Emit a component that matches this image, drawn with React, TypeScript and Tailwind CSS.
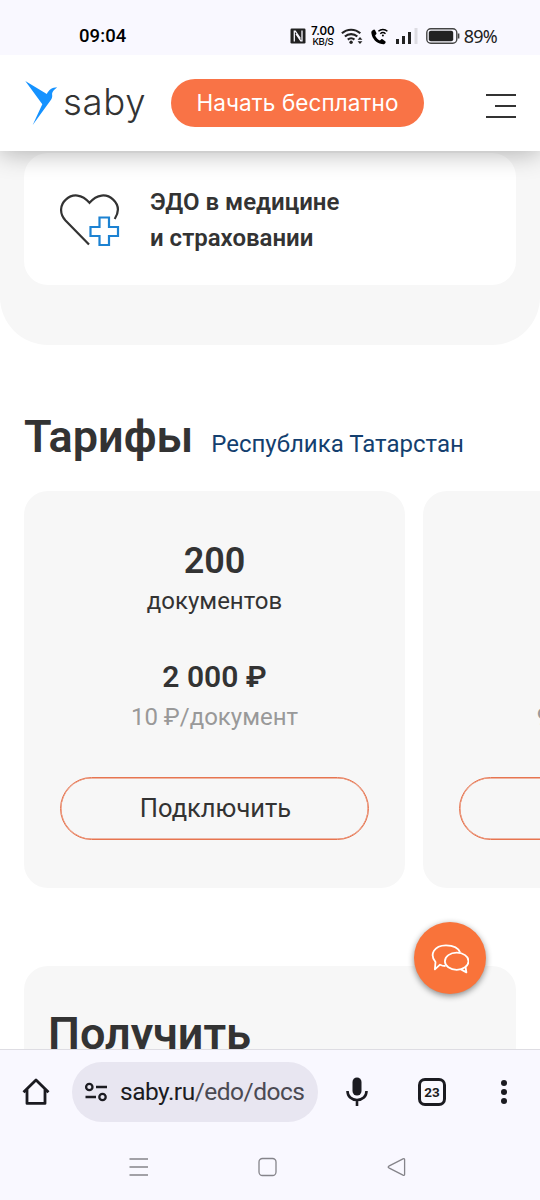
import type { ReactNode } from 'react';

function StatusBar() {
  return (
    <div className="relative z-20 flex h-[55px] shrink-0 items-center bg-[#f9f8ff] pt-[17px] pr-[43px] pl-[79px] text-black">
      <span className="text-[18.5px] leading-none font-medium tracking-[0.1px]">09:04</span>

      <div className="ml-auto flex h-5 items-center">
        {/* NFC */}
        <svg className="mr-[5px] h-4 w-4" viewBox="0 0 16 16" fill="none">
          <rect x="0.5" y="0.5" width="15" height="15" rx="1.2" fill="#222" />
          <path d="M4.3 13.4V3.2h1L10.4 10.5M12 2.6v10.2h-1.2L6 6" stroke="#f9f8ff" strokeWidth="1.3" />
        </svg>
        <div className="mr-1.5 flex w-6 flex-col items-center font-['Inter',sans-serif] font-semibold">
          <span className="text-[11.5px] leading-[11px]">7.00</span>
          <span className="text-[9.5px] leading-[9px] font-medium tracking-[-0.4px]">KB/S</span>
        </div>
        {/* Wi-Fi */}
        <svg className="mr-2 h-[18px] w-[22px]" viewBox="0 0 22 18" fill="none" stroke="#222" strokeWidth="2.1">
          <path d="M0.9 6.3a13.5 13.5 0 0 1 18.4 0M3.9 9.6a9 9 0 0 1 12.4 0M6.8 12.6a4.9 4.9 0 0 1 6.6 0" />
          <circle cx="10.1" cy="15.3" r="1.7" fill="#222" stroke="none" />
          <path d="M16.6 12.7 19 10l2.4 2.7zM16.6 14.3 19 17l2.4-2.7z" fill="#222" stroke="none" />
        </svg>
        {/* Wi-Fi calling */}
        <svg className="mr-2 h-[17px] w-[17px]" viewBox="0 0 17 17" fill="none">
          <path
            d="M1 2.7C.5 3.2.2 4 .4 5.3c.8 5.5 5 10 10.3 10.8 1.2.2 2.5.2 3.3-.7.6-.6.8-1.5.5-2l-3-2.2c-.5-.3-1-.2-1.4.2l-1.2 1.2C6.9 11.6 5 9.7 4.1 7.5l1.1-1.2c.4-.4.4-.9.2-1.4L4.1 2.3C3.7 1.6 3.2 1.5 2.6 1.7z"
            fill="#000"
          />
          <path d="M7.4 3.3a6.400 6.400 0 0 1 9 0M9.300 5.700a3.800 3.800 0 0 1 5.200 0" stroke="#000" strokeWidth="1.4" />
          <circle cx="11.9" cy="7.6" r="1" fill="#000" />
        </svg>
        {/* Signal */}
        <svg className="mr-2 h-4 w-[22px]" viewBox="0 0 22 16">
          <path d="M0 11h3v5H0zM6 8h3v8H6zM12 4h3v12h-3z" fill="#222" />
          <path d="M18.5 0h3v16h-3z" fill="#dddce2" />
        </svg>
        {/* Battery */}
        <svg className="mr-1 h-4 w-[34px]" viewBox="0 0 34 16" fill="none">
          <rect x="0.8" y="0.8" width="30" height="14.4" rx="4" stroke="#444" strokeWidth="1.4" />
          <rect x="2.8" y="2.8" width="24.4" height="10.4" rx="2" fill="#222" />
          <path d="M32.6 5.5v5" stroke="#444" strokeWidth="1.6" />
        </svg>
        <span className="font-['Noto_Sans',sans-serif] text-[18px] leading-none tracking-[-0.8px] text-[#222]">89%</span>
      </div>
    </div>
  );
}

function Header() {
  return (
    <header className="relative z-10 flex h-24 shrink-0 items-center bg-white pr-6 pl-6 shadow-[0_2px_24px_rgba(0,0,0,0.3)]">
      <svg className="h-[46px] w-[34px]" viewBox="0 0 34 46">
        <path d="M1.3 1 22.8 14C25 9.8 28 7.5 33.2 7.3C30 10 27.6 12 28.2 15.2C28.4 17.5 27.6 19.2 26.3 20.8L8.7 45 18.3 24.2Z" fill="#1592ff" />
      </svg>
      <span className="mb-0.5 ml-[5px] w-[84px] font-['Inter',sans-serif] text-[36.5px] leading-none font-[350] tracking-[0.7px] text-[#333]">
        saby
      </span>
      <button className="ml-6 flex h-12 w-[253px] items-center justify-center rounded-full bg-[#f97346] font-['Inter',sans-serif] text-[22.5px] tracking-[0.1px] text-white">
        Начать бесплатно
      </button>
      <div className="mt-1.5 ml-auto flex w-[30px] flex-col items-end gap-[9px]">
        <span className="h-0.5 w-[30px] bg-[#333]" />
        <span className="h-0.5 w-[21px] bg-[#333]" />
        <span className="h-0.5 w-[30px] bg-[#333]" />
      </div>
    </header>
  );
}

function PriceCard({ children }: { children?: ReactNode }) {
  return (
    <div className="flex h-[397px] w-[381px] shrink-0 flex-col items-center rounded-[24px] bg-[#f7f7f7] px-9 pt-[49px] pb-12">
      {children}
      <button className="mt-auto h-[63px] w-full rounded-full border border-[#e77550] pl-0.5 text-[25.5px] text-[#333] shadow-[inset_0_0_0_0.5px_#e77550]">
        Подключить
      </button>
    </div>
  );
}

function BottomBar() {
  return (
    <div className="h-[151px] shrink-0 border-t border-[#dedde3] bg-[#f9f8ff]">
      <div className="flex h-[84px] items-center pl-[22px]">
        <svg className="h-7 w-7" viewBox="0 0 28 28" fill="none" stroke="#1b1b21" strokeWidth="2.8">
          <path d="M1.5 14.3 14 2l12.500 12.300M5 11.500V25.400h18V11.500" strokeLinejoin="round" />
        </svg>
        <div className="ml-[22px] flex h-[60px] w-[246px] items-center overflow-hidden rounded-full bg-[#e8e6f1] pl-3">
          <svg className="h-[22px] w-6" viewBox="0 0 24 22" fill="none" stroke="#1b1b21" strokeWidth="2.3">
            <circle cx="5.3" cy="6" r="3.2" />
            <path d="M12 6h11M1.5 16H12" />
            <circle cx="18.5" cy="16" r="3.2" />
          </svg>
          <span className="ml-3 text-[24.5px] tracking-[-0.5px] text-[#1b1b21]">
            saby.ru<span className="text-[#4b4a53]">/edo/docs</span>
          </span>
        </div>
        <svg className="ml-7 h-[30px] w-[22px]" viewBox="0 0 22 30" fill="none">
          <rect x="6.5" y="0.5" width="9" height="18" rx="4.5" fill="#1b1b21" />
          <path d="M1.5 14c0 5.500 4 9 9.500 9s9.500-3.500 9.500-9M11 23v6" stroke="#1b1b21" strokeWidth="2.6" />
        </svg>
        <div className="ml-[50px] flex h-7 w-7 items-center justify-center rounded-[7px] border-3 border-[#1b1b21] text-[13.5px] font-bold text-[#1b1b21]">
          23
        </div>
        <div className="ml-[55px] flex flex-col gap-[3px]">
          <span className="size-1.5 rounded-full bg-[#1b1b21]" />
          <span className="size-1.5 rounded-full bg-[#1b1b21]" />
          <span className="size-1.5 rounded-full bg-[#1b1b21]" />
        </div>
      </div>

      {/* System navigation */}
      <div className="flex h-[65px] items-start pt-[23px] pl-[129px]">
        <svg className="h-5 w-5" viewBox="0 0 20 20" stroke="#85848a" strokeWidth="1.3">
          <path d="M0.5 2h18.500M0.500 10h18.500M0.500 18h18.500" />
        </svg>
        <svg className="ml-[109px] h-5 w-5" viewBox="0 0 20 20" fill="none" stroke="#85848a" strokeWidth="1.3">
          <rect x="1" y="1.5" width="17" height="17" rx="3.5" />
        </svg>
        <svg className="ml-[109px] h-5 w-5" viewBox="0 0 20 20" fill="none" stroke="#85848a" strokeWidth="1.3" strokeLinejoin="round">
          <path d="M1.8 9.2 16 1.8q1.6-.6 1.6 1v14.4q0 1.600-1.600 1L1.800 10.800q-1.300-.8 0-1.600z" />
        </svg>
      </div>
    </div>
  );
}

export default function App() {
  return (
    <div className="relative flex h-[1200px] w-[540px] flex-col overflow-hidden bg-white font-['Roboto',sans-serif] text-[#333]">
      <StatusBar />
      <Header />

      <main className="flex h-[898px] shrink-0 flex-col overflow-hidden">
        <section className="h-[194px] shrink-0 rounded-b-[48px] bg-[#f7f7f7] px-6 pt-0.5">
          <div className="flex h-[132px] items-center rounded-[24px] bg-white px-9">
            <svg className="h-[60px] w-[60px]" viewBox="0 0 60 60" fill="none" strokeWidth="2.2">
              <path
                d="M29 55.5 5.5 31.5C-1 24.5.2 15.5 5.8 10.6C12.6 4.3 22 5 29.5 13.8C37 5 46.5 4.3 53.2 10.6C58.3 15.5 59.5 22.5 54.7 30"
                stroke="#333"
              />
              <path d="M39.5 28.5h9.500v9.500h9v9h-9v9h-9.500v-9h-9v-9h9z" stroke="#1c82d2" />
            </svg>
            <p className="ml-[30px] pt-0.5 text-[24px] leading-9 font-semibold">
              ЭДО в медицине
              <br />
              и страховании
            </p>
          </div>
        </section>

        <section className="shrink-0 pt-[61px] pl-6">
          <div className="flex h-[85px] items-baseline">
            <h2 className="text-[45px] leading-[62px] font-semibold">Тарифы</h2>
            <a className="-mt-px ml-[18px] text-[24px] text-[#143f6f]">Республика Татарстан</a>
          </div>
          <div className="flex gap-[18px]">
            <PriceCard>
              <div className="text-[36px] leading-[42px] font-semibold">200</div>
              <div className="mt-px text-[24px] leading-9">документов</div>
              <div className="mt-[37px] text-[30px] leading-[42px] font-semibold">2 000 ₽</div>
              <div className="mt-px text-[24px] leading-9 text-[#999]">10 ₽/документ</div>
            </PriceCard>
            <PriceCard>
              <div className="mt-[159px] text-[24px] leading-9 text-[#999]">9 ₽/документ</div>
            </PriceCard>
          </div>
        </section>

        <section className="mx-6 mt-[78px] h-[300px] shrink-0 rounded-[24px] bg-[#f7f7f7] pt-[37px] pl-6">
          <h2 className="text-[45px] leading-[62px] font-semibold">Получить</h2>
        </section>
      </main>

      <BottomBar />

      {/* Chat button */}
      <button className="absolute top-[922px] left-[414px] flex size-[72px] items-center justify-center rounded-full bg-[#f9733a] pt-0.5 shadow-[0_2px_6px_rgba(0,0,0,0.45)]">
        <svg className="h-[30px] w-[38px]" viewBox="0 0 38 30" fill="none" stroke="#fff" strokeWidth="1.8" strokeLinejoin="round">
          <path d="M14.5 22q-3 0-5.500-1.300L3.900 25.300l.6-7.300C-1.800 10.500 3 1.500 15 1.300c7 0 12.500 2.700 14.200 7.300" />
          <ellipse cx="25.7" cy="17.2" rx="11.8" ry="8.6" />
          <path d="M30 25.400l5.400 3-.9-5.800" />
        </svg>
      </button>
    </div>
  );
}
